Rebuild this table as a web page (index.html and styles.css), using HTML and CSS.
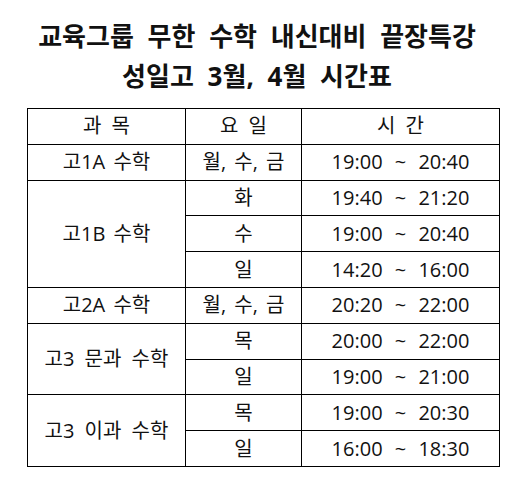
FILE: index.html
```html
<!DOCTYPE html>
<html lang="ko">
<head>
<meta charset="utf-8">
<link rel="stylesheet" href="styles.css">
</head>
<body>
<div class="page">
  <h1 class="title">
    <span class="line">교육그룹 무한 수학 내신대비 끝장특강</span>
    <span class="line">성일고 3월, 4월 시간표</span>
  </h1>
  <table class="schedule">
    <colgroup>
      <col class="c1"><col class="c2"><col class="c3">
    </colgroup>
    <thead>
      <tr><th>과 목</th><th>요 일</th><th>시 간</th></tr>
    </thead>
    <tbody>
      <tr><td>고1A 수학</td><td>월, 수, 금</td><td class="time">19:00 ~ 20:40</td></tr>
      <tr><td rowspan="3">고1B 수학</td><td>화</td><td class="time">19:40 ~ 21:20</td></tr>
      <tr><td>수</td><td class="time">19:00 ~ 20:40</td></tr>
      <tr><td>일</td><td class="time">14:20 ~ 16:00</td></tr>
      <tr><td>고2A 수학</td><td>월, 수, 금</td><td class="time">20:20 ~ 22:00</td></tr>
      <tr><td rowspan="2" class="wide">고3 문과 수학</td><td>목</td><td class="time">20:00 ~ 22:00</td></tr>
      <tr><td>일</td><td class="time">19:00 ~ 21:00</td></tr>
      <tr><td rowspan="2" class="wide">고3 이과 수학</td><td>목</td><td class="time">19:00 ~ 20:30</td></tr>
      <tr><td>일</td><td class="time">16:00 ~ 18:30</td></tr>
    </tbody>
  </table>
</div>
</body>
</html>
```
FILE: styles.css
```css
html, body {
  margin: 0;
  padding: 0;
  background: #ffffff;
}
.page {
  width: 530px;
  height: 493px;
  padding-top: 16px;
  box-sizing: border-box;
  font-family: "Open Sans", "Noto Sans CJK KR", sans-serif;
  color: #111111;
}
.title {
  margin: 0 0 0 -16px;
  font-size: 26px;
  font-weight: 700;
  line-height: 40px;
  text-align: center;
  word-spacing: 7px;
}
.title .line {
  display: block;
}
.schedule {
  margin: 12px 0 0 27px;
  border-collapse: collapse;
  table-layout: fixed;
  width: 472px;
}
.c1 { width: 158px; }
.c2 { width: 116px; }
.c3 { width: 198px; }
.schedule th,
.schedule td {
  border: 1px solid #000000;
  height: 34.8px;
  padding: 0;
  text-align: center;
  vertical-align: middle;
  font-size: 20px;
  font-weight: 400;
  line-height: 22px;
  white-space: nowrap;
  word-spacing: 3px;
}
.schedule th {
  word-spacing: 5px;
}
.schedule .wide {
  word-spacing: 5px;
}
.schedule .time {
  word-spacing: 7px;
}
```
